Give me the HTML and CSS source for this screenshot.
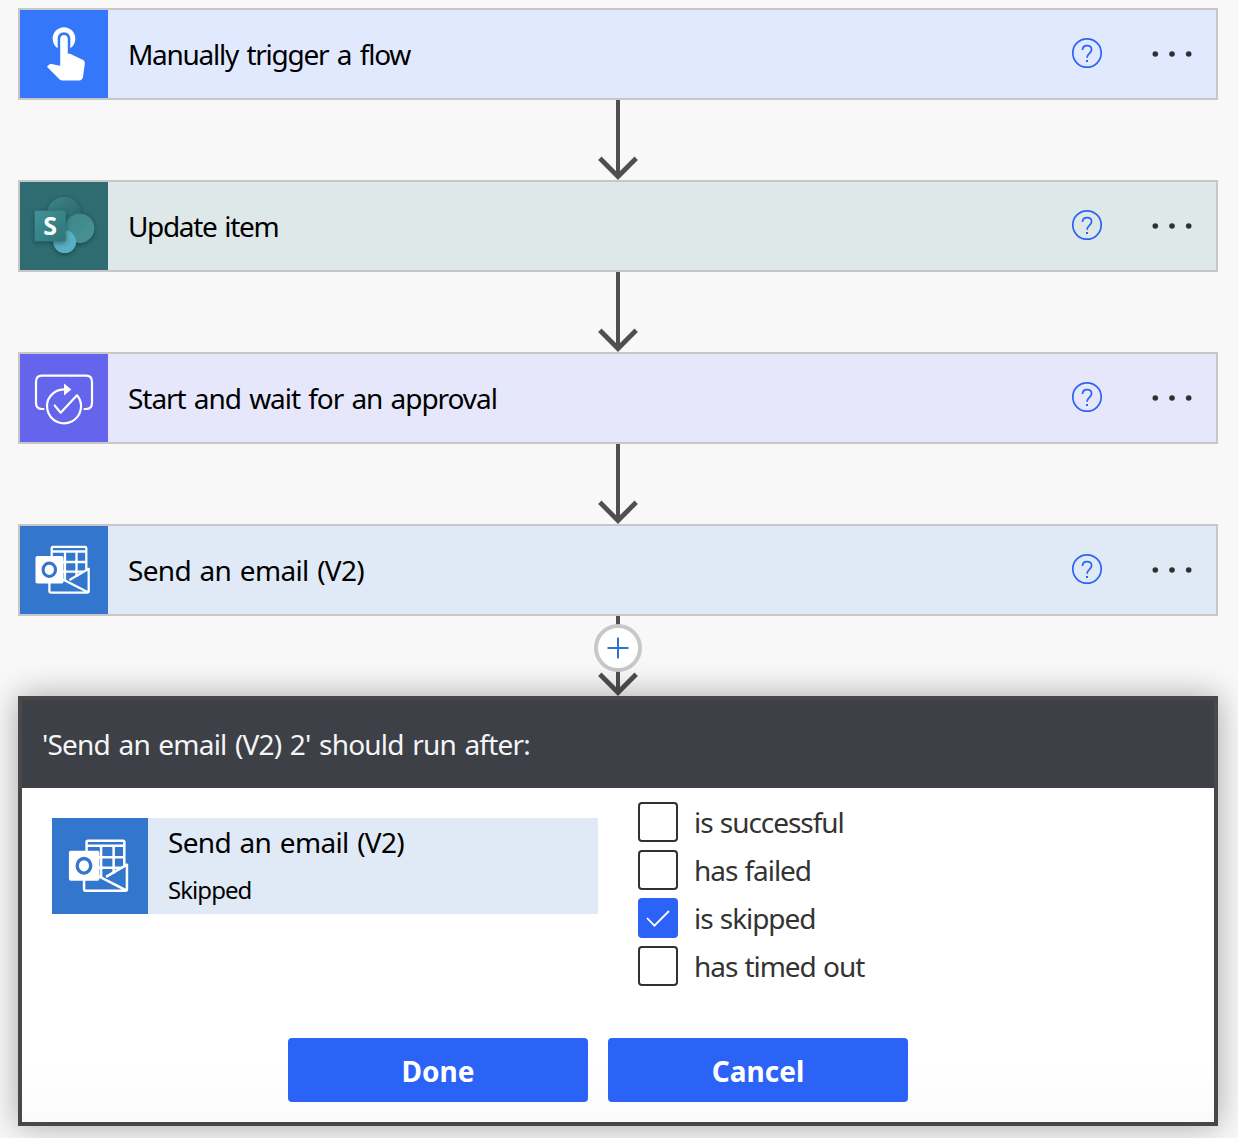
FILE: index.html
```html
<!DOCTYPE html>
<html lang="en">
<head>
<meta charset="utf-8">
<title>Flow editor</title>
<link rel="stylesheet" href="styles.css">
</head>
<body>
<svg class="defs" aria-hidden="true">
  <defs>
    <linearGradient id="sp-a" x1="0" y1="0" x2="0.8" y2="1"><stop offset="0" stop-color="#3d8589"/><stop offset="1" stop-color="#286065"/></linearGradient>
    <linearGradient id="sp-b" x1="0" y1="0" x2="1" y2="1"><stop offset="0" stop-color="#3a868a"/><stop offset="1" stop-color="#4b9296"/></linearGradient>
    <linearGradient id="sp-c" x1="0" y1="0" x2="1" y2="1"><stop offset="0" stop-color="#409397"/><stop offset="1" stop-color="#307478"/></linearGradient>
    <filter id="soft" x="-40%" y="-40%" width="180%" height="180%"><feDropShadow dx="0" dy="1.5" stdDeviation="2.8" flood-color="#082c30" flood-opacity="0.6"/></filter>
  </defs>
  <symbol id="touch" viewBox="0 0 88 88">
    <path transform="translate(14.9 9.7) scale(2.53)" fill="#fff" d="M9 11.24V7.5C9 6.12 10.12 5 11.5 5S14 6.12 14 7.5v3.74c1.21-.81 2-2.18 2-3.74C16 5.01 13.99 3 11.5 3S7 5.01 7 7.5c0 1.56.79 2.93 2 3.74zm9.84 4.63l-4.54-2.26c-.17-.07-.35-.11-.54-.11H13v-6c0-.83-.67-1.5-1.5-1.5S10 6.67 10 7.5v10.74l-3.43-.72c-.08-.01-.15-.03-.24-.03-.31 0-.59.13-.79.33l-.79.8 4.94 4.94c.27.27.65.44 1.06.44h6.79c.75 0 1.33-.55 1.44-1.28l.75-5.27c.01-.07.02-.14.02-.2 0-.62-.38-1.16-.91-1.38z"/>
  </symbol>
  <symbol id="approval" viewBox="0 0 88 88">
    <g fill="none" stroke="#fff" stroke-width="2.200" stroke-linecap="round" stroke-linejoin="round">
      <path d="M23.500 55h-1.500q-6 0-6-6V27.700q0-6 6-6h44q6 0 6 6V49q0 6-6 6h-1.500"/>
      <path d="M34.700 51.500l6 7.200L57 41.300A17 17 0 1 1 44 35.300"/>
    </g>
    <path d="M44 29.500l7.400 6-7.400 6z" fill="#fff"/>
  </symbol>
  <symbol id="outlook" viewBox="0 0 88 88">
    <g fill="none" stroke="#fff" stroke-width="2.300" stroke-linejoin="round">
      <path d="M31.700 31V22q0-1.200 1.200-1.200h32.200q1.200 0 1.200 1.200v21M32 25.500h34M43 36h23M43 45.700h20M45 25.500v29M56.500 25.500V51"/>
      <path d="M29.400 57v8.600q0 1 1 1h37.300q1 0 1-1V42.800L49.500 54M43 53.500l25.500 13"/>
    </g>
    <rect x="15.500" y="30" width="28" height="27.500" rx="1.800" fill="#fff"/>
    <ellipse cx="29.300" cy="43.800" rx="6.200" ry="6.700" fill="none" stroke="#3376cd" stroke-width="3.100"/>
  </symbol>
  <symbol id="help" viewBox="0 0 32 32">
    <g fill="none" stroke="#2b63f6">
      <circle cx="16" cy="16" r="14.200" stroke-width="1.700"/>
      <path d="M11.500 13.100c0-2.900 2-4.500 4.600-4.500s4.500 1.500 4.500 4c0 3.800-4.600 4-4.600 8.200" stroke-width="1.700"/>
    </g>
    <rect x="15" y="23" width="2" height="2" fill="#2b63f6"/>
  </symbol>
  <symbol id="dots" viewBox="0 0 40 8">
    <g fill="#323130"><circle cx="3.300" cy="4" r="2.800"/><circle cx="20" cy="4" r="2.800"/><circle cx="36.700" cy="4" r="2.800"/></g>
  </symbol>
  <symbol id="arrow" viewBox="0 0 40 80">
    <g fill="none" stroke="#4f4f4f">
      <path d="M20 0v76" stroke-width="4"/>
      <path d="M1.800 58.300L20 76.500l18.200-18.200" stroke-width="4.800"/>
    </g>
  </symbol>
</svg>

<main class="flow">
  <section class="card trigger">
    <svg class="tile"><use href="#touch"/></svg>
    <h2 class="title t1">Manually trigger a flow</h2>
    <svg class="help"><use href="#help"/></svg>
    <svg class="dots"><use href="#dots"/></svg>
  </section>
  <div class="link"><svg class="arrow"><use href="#arrow"/></svg></div>

  <section class="card sharepoint">
    <svg class="tile" viewBox="0 0 88 88">
      <g filter="url(#soft)">
        <circle cx="44" cy="32" r="17" fill="url(#sp-a)"/>
        <circle cx="59.700" cy="46.300" r="14.600" fill="url(#sp-b)"/>
        <circle cx="44.700" cy="59.700" r="11.400" fill="#58b1c1"/>
      </g>
      <rect x="14.700" y="28.700" width="31" height="30.500" rx="1.500" fill="url(#sp-c)" filter="url(#soft)"/>
      <text class="logo-s" x="30.200" y="52.600" text-anchor="middle">S</text>
    </svg>
    <h2 class="title t2">Update item</h2>
    <svg class="help"><use href="#help"/></svg>
    <svg class="dots"><use href="#dots"/></svg>
  </section>
  <div class="link"><svg class="arrow"><use href="#arrow"/></svg></div>

  <section class="card approval">
    <svg class="tile"><use href="#approval"/></svg>
    <h2 class="title t3">Start and wait for an approval</h2>
    <svg class="help"><use href="#help"/></svg>
    <svg class="dots"><use href="#dots"/></svg>
  </section>
  <div class="link"><svg class="arrow"><use href="#arrow"/></svg></div>

  <section class="card email">
    <svg class="tile"><use href="#outlook"/></svg>
    <h2 class="title t4">Send an email (V2)</h2>
    <svg class="help"><use href="#help"/></svg>
    <svg class="dots"><use href="#dots"/></svg>
  </section>
  <div class="link">
    <svg class="arrow"><use href="#arrow"/></svg>
    <button class="add" aria-label="Add a step"><svg viewBox="0 0 22 22"><path d="M11 .5v21M.5 11h21" stroke="#2f74d0" stroke-width="2"/></svg></button>
  </div>

  <section class="dialog">
    <header class="dialog-head"><span class="t5">'Send an email (V2) 2' should run after:</span></header>
    <div class="dialog-body">
      <div class="action">
        <svg class="action-tile"><use href="#outlook"/></svg>
        <div class="action-text">
          <span class="action-name t4">Send an email (V2)</span>
          <span class="action-state">Skipped</span>
        </div>
      </div>
      <div class="options">
        <label class="option"><span class="box"></span><span>is successful</span></label>
        <label class="option"><span class="box"></span><span>has failed</span></label>
        <label class="option"><span class="box checked"><svg viewBox="0 0 40 40"><path d="M9 20l7.400 7.700L31 13" fill="none" stroke="#fff" stroke-width="1.800"/></svg></span><span>is skipped</span></label>
        <label class="option"><span class="box"></span><span>has timed out</span></label>
      </div>
    </div>
    <footer class="actions">
      <button class="btn">Done</button>
      <button class="btn">Cancel</button>
    </footer>
  </section>
</main>
</body>
</html>
```
FILE: styles.css
```css
* { box-sizing: border-box; }
body {
  margin: 0;
  height: 1138px;
  overflow: hidden;
  background: #f8f8f8;
  color: #000;
  font-family: "Noto Sans", "Open Sans", sans-serif;
}
svg { display: block; }
.defs { position: absolute; width: 0; height: 0; }
.flow { display: flex; flex-direction: column; width: 1200px; margin: 8px 0 0 18px; }
.card {
  display: flex;
  align-items: center;
  height: 92px;
  padding-right: 24px;
  border: 2px solid #c8c6c6;
}
.tile { width: 88px; height: 88px; flex: none; }
.title { flex: 1; margin: 0; padding: 0 0 0 20px; font-size: 28px; line-height: 38px; font-weight: 400; white-space: nowrap; }
.t1 { letter-spacing: -1.28px; word-spacing: 2.6px; }
.t2 { letter-spacing: -1.35px; word-spacing: 2px; }
.t3 { letter-spacing: -1.05px; word-spacing: 2px; }
.t4 { letter-spacing: -0.68px; word-spacing: 2px; }
.t5 { letter-spacing: -0.8px; word-spacing: 2px; }
.help { width: 32px; height: 32px; margin: 0 49px 2px 0; }
.dots { width: 40px; height: 8px; }
.trigger { background: #e1e9ff; }
.trigger .tile { background: #3477fb; }
.sharepoint { background: #dfe8e8; }
.sharepoint .tile { background: #2f6c71; }
.approval { background: #e7e7fb; }
.approval .tile { background: #6464ec; }
.email { background: #e0eaf6; }
.email .tile { background: #3376cd; }
.logo-s { font-weight: 700; font-size: 25px; fill: #fff; }

.link { position: relative; display: flex; justify-content: center; height: 80px; }
.arrow { width: 40px; height: 80px; }
.add {
  position: absolute;
  top: 8px;
  left: 576px;
  display: flex;
  align-items: center;
  justify-content: center;
  width: 48px;
  height: 48px;
  padding: 0;
  border: 4px solid #c8c8c8;
  border-radius: 50%;
  background: #fff;
}
.add svg { width: 22px; height: 22px; }

.dialog {
  position: relative;
  height: 430px;
  border: 4px solid #484848;
  background: linear-gradient(#fff 85%, #fbfbfb);
  box-shadow: 0 0 30px rgba(0, 0, 0, 0.33);
}
.dialog-head {
  display: flex;
  align-items: center;
  height: 88px;
  padding: 0 20px;
  background: #3d4047;
  color: #f5f5f5;
  font-size: 28px;
  white-space: nowrap;
}
.dialog-body { display: flex; height: 250px; padding: 14px 30px 0; gap: 40px; }
.action { display: flex; width: 546px; height: 96px; margin-top: 16px; background: #e0eaf6; }
.action-tile { width: 96px; height: 96px; background: #3376cd; }
.action-text { display: flex; flex-direction: column; padding: 5px 0 0 20px; white-space: nowrap; }
.action-name { font-size: 28px; line-height: 38px; }
.action-state { margin-top: 12px; font-size: 24px; line-height: 34px; letter-spacing: -0.95px; }
.options { display: flex; flex-direction: column; gap: 8px; }
.option { display: flex; align-items: center; gap: 16px; height: 40px; color: #333; font-size: 28px; line-height: 38px; letter-spacing: -1.05px; word-spacing: 1px; white-space: nowrap; }
.box { width: 40px; height: 40px; border: 2px solid #323130; border-radius: 4px; }
.box.checked { border: 0; background: #2b63f6; }
.actions { display: flex; gap: 20px; padding-left: 266px; }
.btn {
  width: 300px;
  height: 64px;
  padding: 2px 0 0;
  border: 0;
  border-radius: 4px;
  background: #2b63f6;
  color: #fff;
  font: 700 28px "Noto Sans", sans-serif;
}
```
